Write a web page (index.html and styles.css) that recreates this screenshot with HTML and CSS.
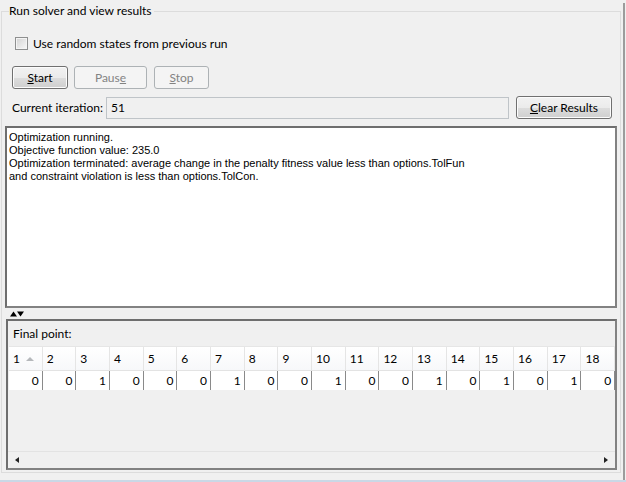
FILE: index.html
```html
<!DOCTYPE html>
<html>
<head>
<meta charset="utf-8">
<link rel="stylesheet" href="styles.css">
</head>
<body>
<div class="window">
  <fieldset class="group">
    <legend class="title">Run solver and view results</legend>
    <div class="check-row"><span class="checkbox"></span><span class="check-text">Use random states from previous run</span></div>
    <div class="btn-row">
      <button class="btn btn-start"><u>S</u>tart</button>
      <button class="btn btn-pause" disabled>Paus<u>e</u></button>
      <button class="btn btn-stop" disabled><u>S</u>top</button>
    </div>
    <div class="iter-row">
      <span class="iter-label">Current iteration:</span>
      <div class="iter-field">51</div>
      <button class="btn btn-clear"><u>C</u>lear Results</button>
    </div>
    <div class="output">
      <div>Optimization running.</div>
      <div>Objective function value: 235.0</div>
      <div>Optimization terminated: average change in the penalty fitness value less than options.TolFun</div>
      <div>and constraint violation is less than options.TolCon.</div>
    </div>
    <div class="splitter">
      <svg class="split-arrows" width="14" height="6" viewBox="0 0 14 6">
        <polygon points="0,5.5 3.5,0.5 7,5.5" fill="#000"/>
        <polygon points="7,0.5 14,0.5 10.5,5.5" fill="#000"/>
      </svg>
    </div>
    <div class="final-panel">
      <div class="final-label">Final point:</div>
      <div class="table">
        <div class="trow thead">
          <div class="th">1<span class="sort"></span></div>
          <div class="th">2</div><div class="th">3</div><div class="th">4</div><div class="th">5</div>
          <div class="th">6</div><div class="th">7</div><div class="th">8</div><div class="th">9</div>
          <div class="th">10</div><div class="th">11</div><div class="th">12</div><div class="th">13</div>
          <div class="th">14</div><div class="th">15</div><div class="th">16</div><div class="th">17</div>
          <div class="th">18</div>
        </div>
        <div class="trow tbody">
          <div class="td">0</div><div class="td">0</div><div class="td">1</div><div class="td">0</div>
          <div class="td">0</div><div class="td">0</div><div class="td">1</div><div class="td">0</div>
          <div class="td">0</div><div class="td">1</div><div class="td">0</div><div class="td">0</div>
          <div class="td">1</div><div class="td">0</div><div class="td">1</div><div class="td">0</div>
          <div class="td">1</div><div class="td">0</div>
        </div>
      </div>
      <div class="filler"></div>
      <div class="hscroll"><span class="arr-left"></span><span class="arr-right"></span></div>
    </div>
  </fieldset>
</div>
<div class="band"></div>
</body>
</html>
```

FILE: styles.css
```css
html, body {
  margin: 0;
  padding: 0;
}
body {
  width: 626px;
  height: 482px;
  overflow: hidden;
  background: #f0f0f0;
  font-family: Lato, "Open Sans", sans-serif;
  font-size: 12px;
  color: #000;
}
.window {
  box-sizing: border-box;
  width: 625px;
  height: 477px;
  border-right: 2px solid #9c9c9c;
}
.group {
  box-sizing: border-box;
  width: 620px;
  height: 470px;
  margin: 3px 0 0 1px;
  padding: 0;
  border: 1px solid #dcdcdc;
  min-width: 0;
}
.title {
  margin-left: 7px;
  padding: 0 2px 0 0;
  line-height: 16px;
  height: 16px;
}
.check-row {
  display: flex;
  align-items: center;
  height: 13px;
  margin: 18px 0 0 13px;
  gap: 5px;
}
.checkbox {
  width: 11px;
  height: 11px;
  border: 1px solid #8e8f8f;
  background: linear-gradient(135deg, #d2d2d2, #f8f8f8);
  box-shadow: inset 0 0 0 1px #f4f4f4;
}
.check-text {
  line-height: 16px;
}
.btn-row {
  display: flex;
  margin: 16px 0 0 10px;
  height: 23px;
}
.btn {
  box-sizing: border-box;
  height: 23px;
  padding: 0;
  font-family: inherit;
  font-size: 12px;
  border: 1px solid #707070;
  border-radius: 3px;
  background: linear-gradient(#f2f2f2 0%, #ebebeb 50%, #dddddd 51%, #cfcfcf 100%);
  color: #000;
  box-shadow: inset 0 0 0 1px #fcfcfc;
}
.btn[disabled] {
  border-color: #adb2b5;
  background: #f4f4f4;
  color: #838383;
  box-shadow: none;
}
.btn-start { width: 56px; }
.btn-pause { width: 73px; margin-left: 6px; }
.btn-stop { width: 55px; margin-left: 7px; }
.iter-row {
  display: flex;
  align-items: center;
  margin: 7px 0 0 10px;
  height: 23px;
}
.iter-label {
  width: 94px;
}
.iter-field {
  box-sizing: border-box;
  width: 403px;
  height: 22px;
  border: 1px solid #bfc4c8;
  background: #f0f0f0;
  padding: 0 4px;
  line-height: 20px;
}
.btn-clear {
  width: 96px;
  margin-left: 7px;
}
.output {
  box-sizing: border-box;
  margin: 7px 0 0 3px;
  width: 612px;
  height: 182px;
  border: 2px solid #828282;
  border-top-color: #6e6e6e;
  border-left-color: #6e6e6e;
  background: #fff;
  padding: 3px 2px;
  font-family: "Liberation Sans", Arial, sans-serif;
  font-size: 11px;
  line-height: 13px;
}
.splitter {
  display: flex;
  align-items: center;
  height: 11px;
  padding-left: 8px;
}
.split-arrows {
  display: block;
}
.final-panel {
  box-sizing: border-box;
  margin-left: 4px;
  width: 611px;
  height: 151px;
  border: 2px solid #828282;
  border-top-color: #6e6e6e;
  border-left-color: #6e6e6e;
  display: flex;
  flex-direction: column;
  overflow: hidden;
}
.final-label {
  height: 25px;
  box-sizing: border-box;
  padding: 5px 0 0 5px;
  line-height: 16px;
}
.table {
  margin-left: 1px;
  width: 606px;
  overflow: hidden;
}
.trow {
  display: flex;
  width: 606px;
}
.thead {
  height: 25px;
  background: linear-gradient(#ffffff, #f7f8fa);
  border-top: 1px solid #e6e6e6;
  border-bottom: 1px solid #e3e3e3;
  box-sizing: border-box;
}
.th {
  flex: 1 1 0;
  min-width: 0;
  box-sizing: border-box;
  border-right: 1px solid #e5e5e5;
  padding-left: 4px;
  line-height: 22px;
  display: flex;
  align-items: center;
  gap: 6px;
}
.sort {
  width: 0;
  height: 0;
  border-left: 4px solid transparent;
  border-right: 4px solid transparent;
  border-bottom: 4px solid #b5b8bb;
}
.tbody {
  height: 19px;
  background: #fff;
}
.td {
  flex: 1 1 0;
  min-width: 0;
  box-sizing: border-box;
  border-right: 1px solid #8a8a8a;
  text-align: right;
  padding-right: 3px;
  line-height: 19px;
  font-size: 12px;
}
.filler {
  flex: 1;
}
.hscroll {
  height: 17px;
  flex: 0 0 17px;
  box-sizing: border-box;
  border-top: 1px solid #e3e3e3;
  display: flex;
  align-items: center;
  justify-content: space-between;
  padding: 0 7px 0 7px;
}
.arr-left, .arr-right {
  width: 0;
  height: 0;
  border-top: 3.5px solid transparent;
  border-bottom: 3.5px solid transparent;
}
.arr-left { border-right: 4px solid #222; }
.arr-right { border-left: 4px solid #222; }
.band {
  height: 5px;
  background: #cad8e6;
}
```
